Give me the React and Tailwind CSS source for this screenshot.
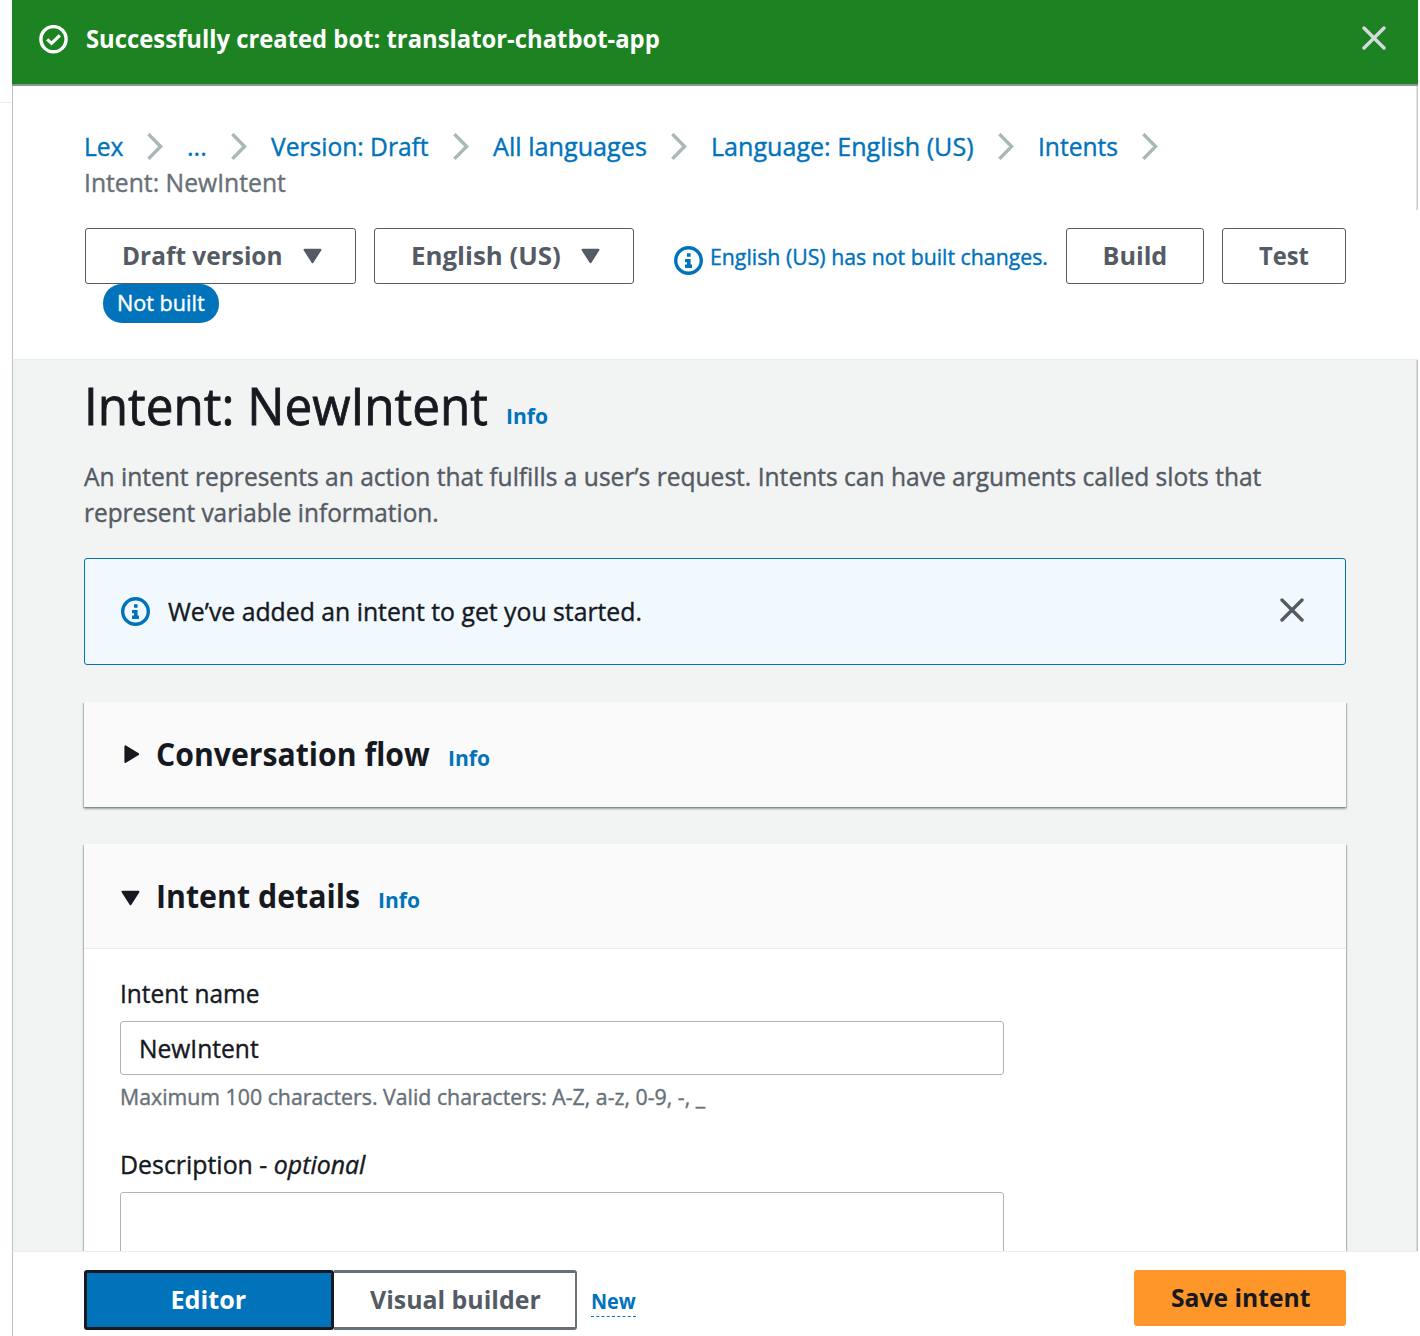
import React, { useLayoutEffect, useRef, useState } from "react";

/* One line of text condensed or widened to a given width, with an optional baseline shift. */
function Fit({ w, y = -1, className = "", children }) {
  const ref = useRef(null);
  const [k, setK] = useState(1);
  useLayoutEffect(() => {
    setK(w / ref.current.offsetWidth);
  }, [w]);
  return (
    <span className={`inline-block whitespace-nowrap ${className}`} style={{ width: w }}>
      <span ref={ref} className="inline-block origin-left" style={{ transform: `translateY(${y}px) scaleX(${k})` }}>
        {children}
      </span>
    </span>
  );
}

const Chevron = () => (
  <svg className="mx-6 h-[28px] w-4 shrink-0" viewBox="0 0 16 28" fill="none" stroke="#aab7b8" strokeWidth="3.4">
    <path d="M1.4 1.1 13.6 13.5 1.4 25.9" />
  </svg>
);

const Close = ({ className }) => (
  <svg className={`h-6 w-6 shrink-0 ${className}`} viewBox="0 0 24 24" fill="none" stroke="currentColor" strokeWidth="3.4" strokeLinecap="round">
    <path d="M2 2 22 22M22 2 2 22" />
  </svg>
);

const InfoIcon = ({ className = "" }) => (
  <svg className={`size-[29px] shrink-0 text-[#0073bb] ${className}`} viewBox="0 0 29 29" fill="none">
    <circle cx="14.5" cy="14.5" r="12.8" stroke="currentColor" strokeWidth="3.4" />
    <path fill="currentColor" d="M13 7.2h3.6v3.6H13zM11 13h5.6v5.6H18v3.4h-7v-3.4h2v-2.4h-2z" />
  </svg>
);

const Down = ({ className = "" }) => (
  <svg className={`h-4 w-[19px] shrink-0 ${className}`} viewBox="0 0 19 16" fill="currentColor" stroke="currentColor" strokeWidth="2" strokeLinejoin="round">
    <path d="M1.5 1.8h16L9.5 14.2z" />
  </svg>
);

const InfoLink = ({ y, className = "" }) => (
  <a className={`text-[21.6px] font-bold text-[#0073bb] [-webkit-text-stroke:0] ${className}`}>
    <Fit w={42} y={y}>Info</Fit>
  </a>
);

const outline =
  "flex h-14 items-center justify-center rounded-[3px] border border-[#545b64] bg-white font-bold text-[#545b64] [-webkit-text-stroke:0]";

const crumbs = [
  ["Lex", 39],
  ["...", 20],
  ["Version: Draft", 158],
  ["All languages", 154],
  ["Language: English (US)", 263],
  ["Intents", 80],
];

export default function App() {
  return (
    <div className="flex h-[1336px] w-[1418px] overflow-hidden bg-white font-['Open_Sans','Noto_Sans',sans-serif] text-[25.2px] leading-9 text-[#16191f] [-webkit-text-stroke:0.4px]">
      <div className="w-3 shrink-0">
        <div className="h-[103px] border-b border-[#eaeded]" />
      </div>
      <main className="flex min-w-0 flex-1 flex-col">
        <div className="flex h-[86px] shrink-0 items-center border-b-2 border-[#879596] bg-[#1d8221] pr-8 pb-[5px] pl-[27px] font-bold text-white [-webkit-text-stroke:0]">
          <svg className="mr-[18px] size-[29px]" viewBox="0 0 29 29" fill="none" stroke="white">
            <circle cx="14.5" cy="14.2" r="12.6" strokeWidth="3.4" />
            <path d="M8.2 14.4 12.6 18.4 20.8 10.4" strokeWidth="3.2" />
          </svg>
          <Fit w={574} y={-2}>Successfully created bot: translator-chatbot-app</Fit>
          <Close className="mb-[3px] ml-auto text-[#d5dbdb]" />
        </div>

        <header className="h-[274px] shrink-0 border-b border-l border-b-[#eaeded] border-l-[#b9c2c3]">
          <div className="flex">
            <nav className="h-[124px] flex-1 pt-[43px] pl-[71px]">
              <div className="flex h-9 items-center">
                {crumbs.map(([label, w]) => (
                  <React.Fragment key={label}>
                    <a className="text-[#0073bb]"><Fit w={w}>{label}</Fit></a>
                    <Chevron />
                  </React.Fragment>
                ))}
              </div>
              <div className="h-9 text-[#687078]"><Fit w={202}>Intent: NewIntent</Fit></div>
            </nav>
            <div className="h-[124px] w-[2px] bg-gradient-to-r from-[#eceeee] to-[#b9c2c3]" />
          </div>
          <div className="flex pt-[18px] pr-[72px] pl-[72px]">
            <div>
              <div className={`${outline} w-[271px] gap-5 pl-[2px]`}>
                <Fit w={161}>Draft version</Fit>
                <Down />
              </div>
              <div className="ml-[18px] flex h-[39px] w-[116px] items-center justify-center rounded-[19px] bg-[#0073bb] text-[21.6px] text-white">
                <Fit w={88}>Not built</Fit>
              </div>
            </div>
            <div className={`${outline} ml-[18px] w-[260px] gap-5 pl-[2px]`}>
              <Fit w={150}>English (US)</Fit>
              <Down />
            </div>
            <div className="ml-10 flex h-14 items-center text-[21.6px] text-[#0073bb]">
              <InfoIcon className="mt-[9px] mr-[7px]" />
              <Fit w={338} className="mt-1">English (US) has not built changes.</Fit>
            </div>
            <div className={`${outline} ml-[18px] w-[138px]`}><Fit w={65}>Build</Fit></div>
            <div className={`${outline} ml-[18px] w-[124px]`}><Fit w={50}>Test</Fit></div>
          </div>
        </header>

        <section className="flex h-[891px] shrink-0 overflow-hidden border-l border-[#b9c2c3] bg-[#f2f3f3]">
          <div className="h-full flex-1 pr-[70px] pl-[71px]">
            <div className="flex h-[99px] items-baseline pt-[17px]">
              <h1 className="text-[50.4px] leading-[60px] [-webkit-text-stroke:0.8px]"><Fit w={404}>Intent: NewIntent</Fit></h1>
              <InfoLink y={-2} className="ml-[18px]" />
            </div>
            <p className="text-[#545b64]">
              <Fit w={1177}>An intent represents an action that fulfills a user’s request. Intents can have arguments called slots that</Fit>
              <br />
              <Fit w={355}>represent variable information.</Fit>
            </p>
            <div className="mt-[27px] flex h-[107px] items-center rounded-[3px] border border-[#0073bb] bg-[#f1f9ff] pr-[41px] pl-9">
              <InfoIcon className="mr-[18px]" />
              <Fit w={474}>We’ve added an intent to get you started.</Fit>
              <Close className="mb-[3px] ml-auto text-[#545b64]" />
            </div>

            <div className="mt-[37px] flex h-[105px] items-center bg-[#fafafa] pl-10 shadow-[0_2px_2px_0_#6b7f7c99,1px_1px_1px_0_#001c2433,-1px_1px_1px_0_#001c2433]">
              <svg className="h-[19px] w-4" viewBox="0 0 16 19" fill="currentColor" stroke="currentColor" strokeWidth="2" strokeLinejoin="round">
                <path d="M1.4 1.4v15.6L14.2 9.2z" />
              </svg>
              <div className="ml-4 flex items-baseline text-[32.4px] leading-[40px] font-bold [-webkit-text-stroke:0]">
                <Fit w={274} y={1}>Conversation flow</Fit>
                <InfoLink y={1} className="ml-[18px]" />
              </div>
            </div>

            <div className="mt-[37px] h-[500px] bg-white shadow-[0_2px_2px_0_#6b7f7c99,1px_1px_1px_0_#001c2433,-1px_1px_1px_0_#001c2433]">
              <div className="flex h-[105px] items-center border-b border-[#eaeded] bg-[#fafafa] pl-[37px]">
                <Down className="mt-[3px]" />
                <div className="ml-4 flex items-baseline text-[32.4px] leading-[40px] font-bold [-webkit-text-stroke:0]">
                  <Fit w={204} y={1}>Intent details</Fit>
                  <InfoLink y={1} className="ml-[18px]" />
                </div>
              </div>
              <div className="px-9 pt-[27px]">
                <div><Fit w={139}>Intent name</Fit></div>
                <div className="mt-[9px] flex h-[54px] w-[884px] items-center rounded-[3px] border border-[#aab7b8] pl-[18px]">
                  <Fit w={120} y={0}>NewIntent</Fit>
                </div>
                <div className="mt-1 text-[21.6px] text-[#687078]">
                  <Fit w={585} y={0}>Maximum 100 characters. Valid characters: A-Z, a-z, 0-9, -, _</Fit>
                </div>
                <div className="mt-8">
                  <Fit w={245}>Description - <i>optional</i></Fit>
                </div>
                <div className="mt-[9px] h-[110px] w-[884px] rounded-[3px] border border-[#aab7b8]" />
              </div>
            </div>
          </div>
          <div className="h-full w-[2px] bg-gradient-to-r from-[#e2e5e5] to-[#b0b9ba]" />
        </section>

        <footer className="flex h-[85px] shrink-0 border-t border-l border-t-[#eaeded] border-l-[#b9c2c3] pt-[18px] pr-[72px] pl-[71px] font-bold [-webkit-text-stroke:0]">
          <div className="flex h-[60px] w-[250px] items-center justify-center rounded-[3px] border-[3px] border-[#16191f] bg-[#0073bb] pr-px text-white">
            <Fit w={76}>Editor</Fit>
          </div>
          <div className="flex h-[60px] w-[243px] items-center justify-center rounded-r-[3px] border-y-[3px] border-r-2 border-[#687078] pl-px text-[#545b64]">
            <Fit w={171}>Visual builder</Fit>
          </div>
          <div className="mt-4 ml-[14px] h-[31px] border-b border-dashed border-[#0073bb] text-[21.6px] leading-[30px] text-[#0073bb]">
            <Fit w={45} y={0}>New</Fit>
          </div>
          <div className="ml-auto flex h-14 w-[212px] items-center justify-center rounded-[3px] bg-[#ff9629]">
            <Fit w={139}>Save intent</Fit>
          </div>
        </footer>
      </main>
    </div>
  );
}
